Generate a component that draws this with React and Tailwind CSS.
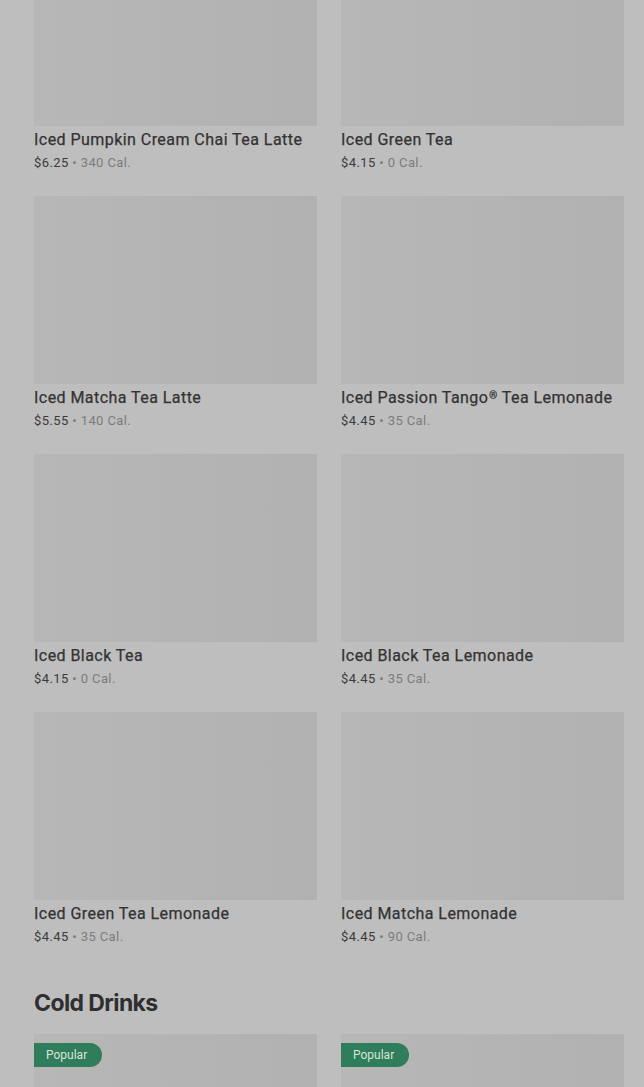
const teas = [
  { name: 'Iced Pumpkin Cream Chai Tea Latte', price: '$6.25', cal: '340 Cal.' },
  { name: 'Iced Green Tea', price: '$4.15', cal: '0 Cal.' },
  { name: 'Iced Matcha Tea Latte', price: '$5.55', cal: '140 Cal.' },
  { name: 'Iced Passion Tango', reg: true, rest: ' Tea Lemonade', price: '$4.45', cal: '35 Cal.' },
  { name: 'Iced Black Tea', price: '$4.15', cal: '0 Cal.' },
  { name: 'Iced Black Tea Lemonade', price: '$4.45', cal: '35 Cal.' },
  { name: 'Iced Green Tea Lemonade', price: '$4.45', cal: '35 Cal.' },
  { name: 'Iced Matcha Lemonade', price: '$4.45', cal: '90 Cal.' },
]

function Card({ item }) {
  return (
    <div className="flex flex-col">
      <div className="h-[188px] bg-gradient-to-r from-[#b7b7b7] to-[#b1b1b1]" />
      <div className="mt-[3px] text-[16px] leading-[22px] text-[#333333] tracking-[0.45px] [-webkit-text-stroke:0.25px_#333333]">
        {item.name}
        {item.reg && <sup className="text-[10px] ml-[1px] top-[-0.45em]">®</sup>}
        {item.rest}
      </div>
      <div className="mt-[2px] text-[13px] leading-[20px] tracking-[0.4px]">
        <span className="text-[#3b3b3b]">{item.price}</span>
        <span className="text-[#7c7c7c]"> • {item.cal}</span>
      </div>
    </div>
  )
}

export default function App() {
  return (
    <div className="min-h-[1087px] h-[1087px] overflow-hidden bg-[#bebebe] pl-[34px] pr-[20px] font-['Roboto','Liberation_Sans',sans-serif]">
      <div className="-mt-[62px] grid grid-cols-2 gap-x-[24px] gap-y-[23px]">
        {teas.map((t) => (
          <Card key={t.name} item={t} />
        ))}
      </div>
      <h2 className="mt-[40px] text-[23px] leading-[32px] font-bold tracking-[-0.6px] text-[#2f2f2f] font-['Inter','Liberation_Sans',sans-serif]">
        Cold Drinks
      </h2>
      <div className="mt-[15px] grid grid-cols-2 gap-x-[24px]">
        {[0, 1].map((i) => (
          <div key={i} className="h-[200px] bg-gradient-to-r from-[#b7b7b7] to-[#b1b1b1] pt-[8px]">
            <span className="inline-block h-[24px] w-[68px] rounded-r-full bg-[#2f7d5a] pl-[12px] text-[12px] leading-[24px] text-[#d6e6dc]">
              Popular
            </span>
          </div>
        ))}
      </div>
    </div>
  )
}
